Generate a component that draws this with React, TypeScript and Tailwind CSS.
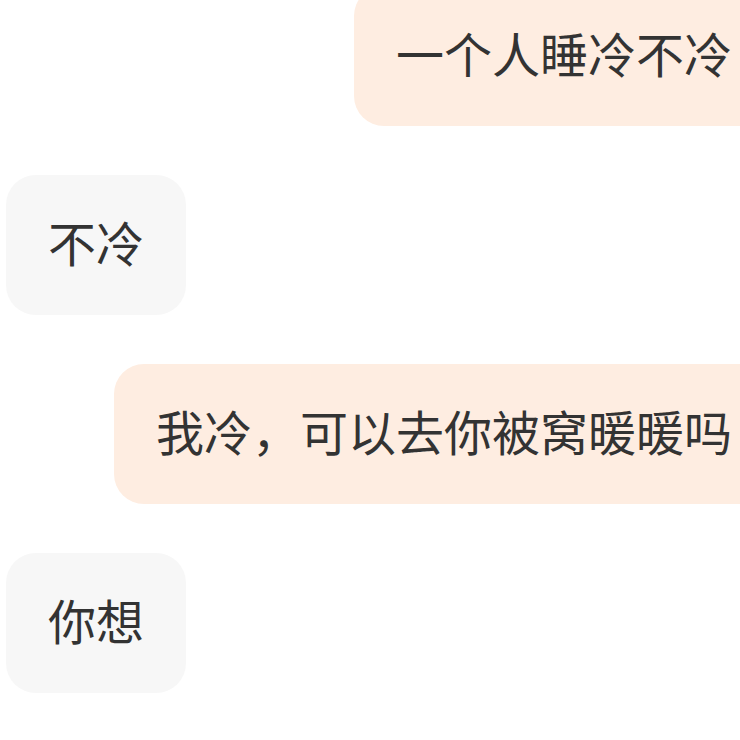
export default function App() {
  const msgs: { side: "l" | "r"; text: string }[] = [
    { side: "r", text: "一个人睡冷不冷" },
    { side: "l", text: "不冷" },
    { side: "r", text: "我冷，可以去你被窝暖暖吗" },
    { side: "l", text: "你想" },
  ];
  return (
    <div
      className="w-[740px] h-[740px] overflow-hidden bg-white"
      style={{ fontFamily: '"Noto Sans CJK SC", "Noto Sans", sans-serif' }}
    >
      <div className="flex flex-col gap-[49px] -mt-[14px] pl-[6px] -mr-[34px]">
        {msgs.map((m, i) =>
          m.side === "r" ? (
            <div key={i} className="flex justify-end">
              <div className="h-[140px] flex items-center px-[42px] pb-[8px] rounded-[30px] bg-[#feede1] text-[#333333] text-[48px] leading-none whitespace-nowrap">
                {m.text}
              </div>
            </div>
          ) : (
            <div key={i} className="flex justify-start">
              <div className="h-[140px] flex items-center px-[42px] pb-[8px] rounded-[30px] bg-[#f7f7f7] text-[#333333] text-[48px] leading-none whitespace-nowrap">
                {m.text}
              </div>
            </div>
          )
        )}
      </div>
    </div>
  );
}
